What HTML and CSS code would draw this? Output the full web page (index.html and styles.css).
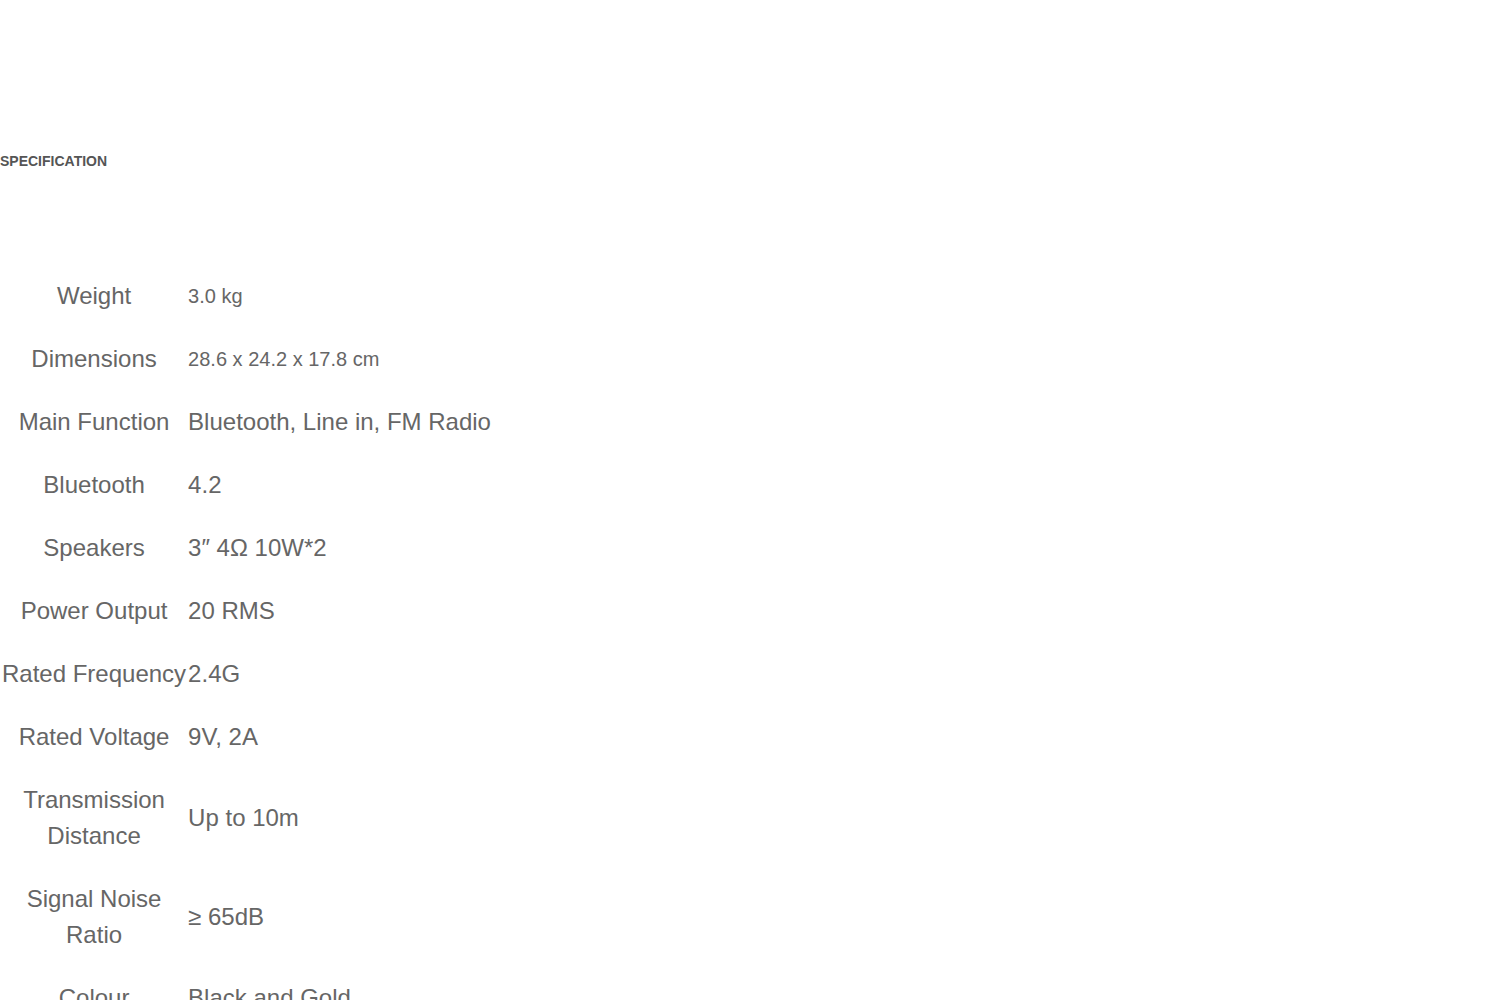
FILE: index.html
```html
<!DOCTYPE html>
<html lang="en">
<head>
    <meta charset="UTF-8">
    <title>Specification</title>
    <link rel="stylesheet" href="styles.css">
</head>
<body>
<div class="spec">
    <!--标题-->
    <h2 class="spec-title">SPECIFICATION</h2>
    <!--参数表-->
    <table class="spec-table">
        <tr><td class="label">Weight</td><td class="value small">3.0 kg</td></tr>
        <tr><td class="label">Dimensions</td><td class="value small">28.6 x 24.2 x 17.8 cm</td></tr>
        <tr><td class="label">Main Function</td><td class="value">Bluetooth, Line in, FM Radio</td></tr>
        <tr><td class="label">Bluetooth</td><td class="value">4.2</td></tr>
        <tr><td class="label">Speakers</td><td class="value">3″ 4Ω 10W*2</td></tr>
        <tr><td class="label">Power Output</td><td class="value">20 RMS</td></tr>
        <tr><td class="label nowrap">Rated Frequency</td><td class="value">2.4G</td></tr>
        <tr><td class="label">Rated Voltage</td><td class="value">9V, 2A</td></tr>
        <tr><td class="label">Transmission Distance</td><td class="value">Up to 10m</td></tr>
        <tr><td class="label">Signal Noise Ratio</td><td class="value">≥ 65dB</td></tr>
        <tr><td class="label">Colour</td><td class="value">Black and Gold</td></tr>
    </table>
</div>
</body>
</html>
```

FILE: styles.css
```css
* {
    margin: 0;
    padding: 0;
}

body {
    font-family: "Liberation Sans", Arial, sans-serif;
    color: #666;
    background: #fff;
}

.spec {
    padding-top: 151px;
}

/*标题*/
.spec-title {
    font-size: 14px;
    line-height: 20px;
    font-weight: bold;
    color: #555;
}

/*参数表*/
.spec-table {
    margin-top: 93px;
    border-spacing: 2px;
}

.spec-table td {
    font-size: 24px;
    line-height: 36px;
    padding: 12px 0 13px;
    vertical-align: middle;
}

.spec-table .label {
    width: 184px;
    text-align: center;
}

/*不换行*/
.spec-table .nowrap {
    white-space: nowrap;
}

.spec-table .value {
    text-align: left;
}

.spec-table .small {
    font-size: 20px;
}
```
